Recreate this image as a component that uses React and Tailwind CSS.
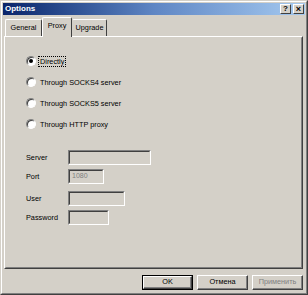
import React from "react";

const font = { fontFamily: '"Liberation Sans", Arial, sans-serif' };

function Radio({ label, checked, focus }) {
  return (
    <div className="flex items-center h-[10px]">
      <div className="w-[10px] h-[10px] rounded-full border border-t-[#808080] border-l-[#808080] border-r-white border-b-white bg-white flex items-center justify-center shadow-[inset_1px_1px_0_#404040]">
        {checked && <div className="w-[4px] h-[4px] rounded-full bg-black" />}
      </div>
      <span
        className={
          "ml-[3px] text-[7.3px] leading-[9px] text-black px-[1px] " +
          (focus ? "outline outline-1 outline-dotted outline-black" : "")
        }
      >
        {label}
      </span>
    </div>
  );
}

function Field({ label, width, value, className }) {
  return (
    <div className={"flex items-center " + className}>
      <span className="w-[42px] text-[7.3px] leading-[9px] text-black">{label}</span>
      <div
        className="h-[15px] bg-[#d4d0c8] border border-t-[#808080] border-l-[#808080] border-r-white border-b-white flex items-center"
        style={{ width }}
      >
        <div className="w-full h-full border border-t-[#404040] border-l-[#404040] border-r-[#d4d0c8] border-b-[#d4d0c8] flex items-center px-[2px]">
          {value && <span className="text-[7px] text-[#808080]">{value}</span>}
        </div>
      </div>
    </div>
  );
}

function Btn({ children, def, disabled }) {
  return (
    <div
      className={
        "w-[51px] h-[15px] flex items-center justify-center text-[7.3px] " +
        (def ? "border border-black " : "") +
        (disabled ? "text-[#808080]" : "text-black")
      }
    >
      <div className="w-full h-full flex items-center justify-center border border-t-white border-l-white border-r-[#404040] border-b-[#404040] shadow-[inset_-1px_-1px_0_#808080]">
        {children}
      </div>
    </div>
  );
}

export default function App() {
  return (
    <div
      className="w-[308px] h-[295px] bg-[#d4d0c8] border border-t-[#d4d0c8] border-l-[#d4d0c8] border-r-[#404040] border-b-[#404040] flex flex-col"
      style={font}
    >
      <div className="flex-1 flex flex-col border border-t-white border-l-white border-r-[#808080] border-b-[#808080] p-[1px]">
        {/* Title bar */}
        <div className="h-[12px] flex items-center bg-gradient-to-r from-[#0a246a] via-[#5f86c4] to-[#a6caf0] pl-[2px] pr-[1px]">
          <span className="text-white font-bold text-[8px] leading-[10px]">Options</span>
          <div className="ml-auto flex gap-[2px]">
            <div className="w-[11px] h-[10px] bg-[#d4d0c8] border border-t-white border-l-white border-r-[#404040] border-b-[#404040] flex items-center justify-center text-[8px] font-bold leading-none text-black">
              ?
            </div>
            <div className="w-[11px] h-[10px] bg-[#d4d0c8] border border-t-white border-l-white border-r-[#404040] border-b-[#404040] flex items-center justify-center text-[9px] font-bold leading-none text-black">
              ×
            </div>
          </div>
        </div>

        {/* Tabs */}
        <div className="flex items-end h-[20px] pl-[2px] mt-[1px]">
          <div className="h-[17px] w-[37px] flex items-center justify-center text-[7.3px] text-black border border-b-0 border-t-white border-l-white border-r-[#404040] rounded-t-[2px]">
            General
          </div>
          <div className="h-[20px] w-[30px] -mb-[1px] relative z-10 bg-[#d4d0c8] flex items-center justify-center text-[7.3px] text-black border border-b-0 border-t-white border-l-white border-r-[#404040] rounded-t-[2px] pb-[2px]">
            Proxy
          </div>
          <div className="h-[17px] w-[35px] flex items-center justify-center text-[7.3px] text-black border border-b-0 border-t-white border-l-[#d4d0c8] border-r-[#404040] rounded-t-[2px]">
            Upgrade
          </div>
        </div>

        {/* Panel */}
        <div className="mx-[1px] h-[233px] border border-t-white border-l-white border-r-[#404040] border-b-[#404040] mr-[2px]">
          <div className="w-full h-full border border-transparent border-r-[#808080] border-b-[#808080] flex flex-col pl-[20px] pt-[18px]">
            <div className="flex flex-col gap-[11px]">
              <Radio label="Directly" checked focus />
              <Radio label="Through SOCKS4 server" />
              <Radio label="Through SOCKS5 server" />
              <Radio label="Through HTTP proxy" />
            </div>
            <Field label="Server" width={83} className="mt-[21px]" />
            <Field label="Port" width={36} value="1080" className="mt-[4px]" />
            <Field label="User" width={57} className="mt-[7px]" />
            <Field label="Password" width={41} className="mt-[4px]" />
          </div>
        </div>

        {/* Buttons */}
        <div className="flex justify-end gap-[4px] mt-[6px] pr-[2px]">
          <Btn def>OK</Btn>
          <Btn>Отмена</Btn>
          <Btn disabled>Применить</Btn>
        </div>
      </div>
    </div>
  );
}
